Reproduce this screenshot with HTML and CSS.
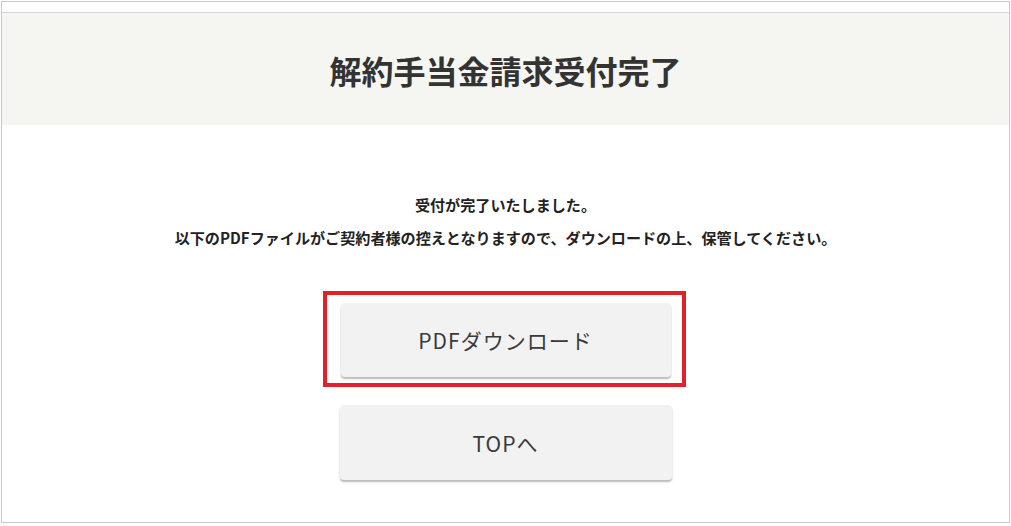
FILE: index.html
```html
<!DOCTYPE html>
<html lang="ja">
<head>
<meta charset="utf-8">
<title>解約手当金請求受付完了</title>
<link rel="stylesheet" href="styles.css">
</head>
<body>
<div class="frame">
  <div class="topstrip"></div>
  <header class="header">
    <h1 class="title">解約手当金請求受付完了</h1>
  </header>
  <main class="content">
    <p class="msg">受付が完了いたしました。</p>
    <p class="msg">以下のPDFファイルがご契約者様の控えとなりますので、ダウンロードの上、保管してください。</p>
    <div class="highlight">
      <button class="btn" type="button">PDFダウンロード</button>
    </div>
    <button class="btn btn-top" type="button">TOPへ</button>
  </main>
</div>
</body>
</html>
```
FILE: styles.css
```css
html, body {
  margin: 0;
  padding: 0;
  background: #ffffff;
}
body {
  padding: 1px 0 0 1px;
  font-family: "Noto Sans CJK JP", "Noto Sans", sans-serif;
  color: #333333;
}
.frame {
  box-sizing: border-box;
  width: 1009px;
  height: 522px;
  border: 1px solid #c9c9c9;
  display: flex;
  flex-direction: column;
}
.topstrip {
  height: 10px;
  border-bottom: 1px solid #d6d6d6;
}
.header {
  height: 112px;
  background: #f5f5f1;
  display: flex;
  align-items: center;
  justify-content: center;
}
.title {
  margin: 0;
  font-size: 32px;
  font-weight: 700;
  color: #333333;
  line-height: 1;
  padding-top: 2px;
}
.content {
  display: flex;
  flex-direction: column;
  align-items: center;
  padding-top: 63px;
}
.msg {
  margin: 0;
  font-size: 15.1px;
  font-weight: 700;
  line-height: 33px;
  color: #222222;
}
.highlight {
  margin-top: 37px;
  margin-right: 3px;
  border: 4px solid #e0202a;
  padding: 8px 11px 6px 14px;
  display: flex;
}
.btn {
  width: 330px;
  height: 74px;
  border: none;
  border-radius: 4px;
  background: #f2f2f2;
  box-shadow: 0 2px 2px rgba(0, 0, 0, 0.28);
  font-family: "Noto Sans CJK JP", "Noto Sans", sans-serif;
  font-size: 21px;
  font-weight: 400;
  color: #3a3a3a;
  letter-spacing: 1px;
  padding: 0;
}
.btn-top {
  margin-top: 18px;
  width: 332px;
  height: 75px;
}
```
